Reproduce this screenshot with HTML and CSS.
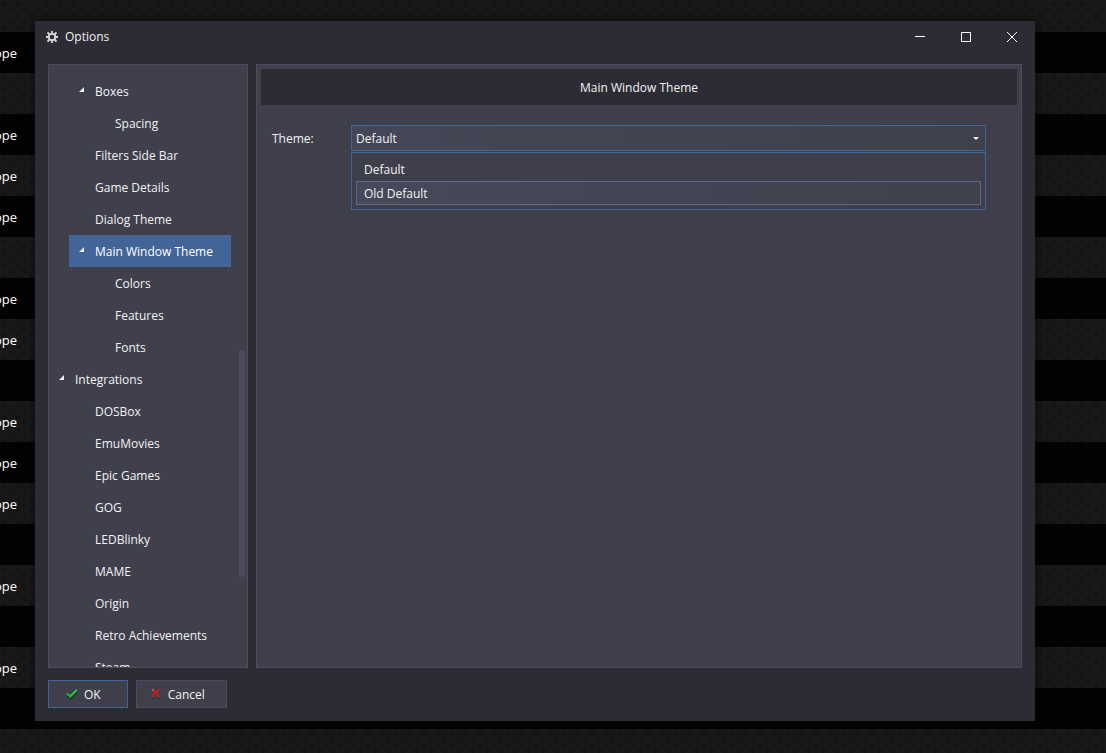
FILE: index.html
```html
<!DOCTYPE html>
<html lang="en">
<head>
<meta charset="utf-8">
<title>Options</title>
<link rel="stylesheet" href="styles.css">
</head>
<body>
<ul class="backdrop">
<li></li><li><span>ope</span></li><li></li><li><span>ope</span></li><li><span>ope</span></li><li><span>ope</span></li><li></li><li><span>ope</span></li><li><span>ope</span></li><li></li><li><span>ope</span></li><li><span>ope</span></li><li><span>ope</span></li><li></li><li><span>ope</span></li><li></li><li><span>ope</span></li><li></li><li></li>
</ul>
<section class="dialog" role="dialog" aria-labelledby="title">
  <header class="titlebar">
    <svg class="gear" viewBox="0 0 12 12" aria-hidden="true"><g fill="none" stroke="#dddbd6"><circle cx="6" cy="6" r="3.200" stroke-width="1.800"/><path stroke-width="1.800" d="M6 0v2.500M6 9.500V12M0 6h2.500M9.500 6H12M1.500 1.500l2 2M8.500 8.500l2 2M1.500 10.500l2-2M8.500 3.500l2-2"/></g></svg>
    <h1 id="title" class="title">Options</h1>
    <button class="winbtn" aria-label="Minimize"><svg viewBox="0 0 10 10"><path d="M0 4.500h10"/></svg></button>
    <button class="winbtn" aria-label="Maximize"><svg viewBox="0 0 10 10"><path d="M.5.5h9v9h-9z"/></svg></button>
    <button class="winbtn" aria-label="Close"><svg viewBox="0 0 10 10"><path d="M0 0l10 10M10 0L0 10"/></svg></button>
  </header>
  <div class="body">
    <nav class="sidebar">
      <div class="viewport">
        <ul class="tree">
          <li>
            <ul>
              <li><button class="node open">Boxes</button>
                <ul><li><button class="node">Spacing</button></li></ul></li>
              <li><button class="node">Filters Side Bar</button></li>
              <li><button class="node">Game Details</button></li>
              <li><button class="node">Dialog Theme</button></li>
              <li><button class="node open selected">Main Window Theme</button>
                <ul>
                  <li><button class="node">Colors</button></li>
                  <li><button class="node">Features</button></li>
                  <li><button class="node">Fonts</button></li>
                </ul></li>
            </ul>
          </li>
          <li><button class="node open">Integrations</button>
            <ul>
              <li><button class="node">DOSBox</button></li>
              <li><button class="node">EmuMovies</button></li>
              <li><button class="node">Epic Games</button></li>
              <li><button class="node">GOG</button></li>
              <li><button class="node">LEDBlinky</button></li>
              <li><button class="node">MAME</button></li>
              <li><button class="node">Origin</button></li>
              <li><button class="node">Retro Achievements</button></li>
              <li><button class="node">Steam</button></li>
            </ul>
          </li>
        </ul>
      </div>
      <div class="thumb"></div>
    </nav>
    <main class="panel">
      <h2 class="heading">Main Window Theme</h2>
      <div class="field">
        <label for="theme">Theme:</label>
        <div class="combo">
          <select id="theme"><option>Default</option><option>Old Default</option></select>
          <svg class="caret" viewBox="0 0 6 3" aria-hidden="true"><path fill="#fff" d="M0 0h6L3 3z"/></svg>
          <ul class="popup" role="listbox" aria-label="Theme">
            <li role="option">Default</li>
            <li role="option" class="active">Old Default</li>
          </ul>
        </div>
      </div>
    </main>
  </div>
  <footer class="actions">
    <button class="action primary"><svg viewBox="0 0 12 12" aria-hidden="true"><path fill="none" stroke="#111b22" stroke-opacity=".4" stroke-width="2" d="M1 7l3.500 3L11 3"/><path fill="none" stroke="#14c02a" stroke-width="2" d="M1 4.500L4.300 7.500 10.800 1"/><path fill="none" stroke="#3ee04c" d="M4.500 6.500L10.500 .7"/></svg>OK</button>
    <button class="action"><svg viewBox="0 0 12 12" aria-hidden="true"><path fill="none" stroke="#3c1720" stroke-opacity=".6" d="M2 9.500h3M8 9.500h2"/><path fill="none" stroke="#e3151b" stroke-width="1.600" d="M1.500 .8c3 1 5.500 3.500 7.500 7.200M9.500 .3C6 2.500 4 5 2 8"/><path fill="none" stroke="#ff6262" d="M2 .8h2"/></svg>Cancel</button>
  </footer>
</section>
</body>
</html>
```
FILE: styles.css
```css
* { box-sizing: border-box; }
body {
  margin: 0;
  height: 100vh;
  overflow: hidden;
  background: #000;
  color: #f2f2f2;
  font: 12px/16px "Open Sans", "Noto Sans", sans-serif;
}
ul { list-style: none; margin: 0; padding: 0; }
button, select { font: inherit; color: inherit; }
h1, h2 { margin: 0; font: inherit; }

.backdrop { font-size: 13px; color: #fff; }
.backdrop li {
  height: 41px;
  display: flex;
  align-items: center;
  overflow: hidden;
  background: radial-gradient(circle at 4px 4px, #000 1px, transparent 2px) 0 0 / 14px 12px,
    radial-gradient(circle at 11px 10px, #000 1px, transparent 2px) 0 0 / 14px 12px, #030303;
}
.backdrop li:nth-child(odd) {
  background: radial-gradient(circle at 4px 4px, #131313 1px, transparent 3px) 0 0 / 14px 12px,
    radial-gradient(circle at 11px 10px, #131313 1px, transparent 3px) 0 0 / 14px 12px, #181818;
}
.backdrop li:first-child { height: 32px; }
.backdrop span { width: 17px; display: flex; justify-content: flex-end; }

.dialog {
  position: absolute;
  inset: 21px 71px 32px 35px;
  display: flex;
  flex-direction: column;
  background: #2d2c35;
  box-shadow: 0 0 10px rgba(0, 0, 0, .5);
}
.titlebar { display: flex; align-items: center; height: 32px; padding-left: 11px; }
.gear { width: 12px; height: 12px; }
.title { flex: 1; padding-left: 7px; }
.winbtn { width: 46px; height: 32px; padding: 0; border: 0; background: none; display: grid; place-items: center; }
.winbtn svg { width: 10px; height: 10px; fill: none; stroke: #fff; }

.body { flex: 1; min-height: 0; display: flex; gap: 8px; padding: 11px 13px 12px; }
.sidebar { position: relative; width: 200px; border: 1px solid #4c4b5f; background: #3f404c; }
.viewport { height: 100%; overflow: hidden; padding: 10px 16px 0 0; }
.tree ul { margin-left: 20px; }
.node {
  display: flex;
  align-items: center;
  width: 100%;
  height: 32px;
  padding: 2px 0 0 26px;
  border: 0;
  background: none;
  white-space: nowrap;
}
.open { padding-left: 10px; gap: 11px; }
.open::before {
  content: "";
  width: 5px;
  height: 5px;
  margin-bottom: 5px;
  background: #eee;
  clip-path: polygon(100% 0, 100% 100%, 0 100%);
}
.selected { background: #426496; color: #fff; }
.thumb { position: absolute; top: 285px; right: 2px; bottom: 90px; width: 6px; border-radius: 3px; background: #4c4b5f; }

.panel { flex: 1; padding: 4px; border: 1px solid #4c4b5f; background: #3f404c; }
.heading { display: grid; place-items: center; height: 36px; padding-top: 2px; background: #2d2c35; }
.field { display: flex; align-items: center; margin-top: 20px; padding: 0 31px 0 11px; }
.field label { width: 79px; padding-top: 2px; }
.combo { position: relative; flex: 1; display: flex; }
.combo select {
  appearance: none;
  width: 100%;
  height: 26px;
  padding: 2px 4px 0;
  border: 1px solid #426496;
  border-radius: 0;
  outline: 0;
  background: linear-gradient(90deg, #454756, #3f404c);
}
.caret { position: absolute; right: 7px; top: 12px; width: 6px; height: 3px; }
.popup {
  position: absolute;
  top: 27px;
  left: 0;
  right: 0;
  padding: 4px;
  border: 1px solid #426496;
  background: #3e3f4b;
}
.popup li { height: 24px; padding: 4px 7px 0; border: 1px solid transparent; }
.popup .active { border-color: #66658a; background: linear-gradient(90deg, #474859, #40414e); }

.actions { display: flex; gap: 8px; padding: 0 13px 13px; }
.action {
  display: flex;
  align-items: center;
  gap: 6px;
  height: 28px;
  padding: 2px 21px 0 13px;
  border: 1px solid #4c4b5f;
  background: #3f404c;
}
.action svg { width: 12px; height: 12px; }
.primary { border-color: #426496; padding: 2px 26px 0 17px; }
```
